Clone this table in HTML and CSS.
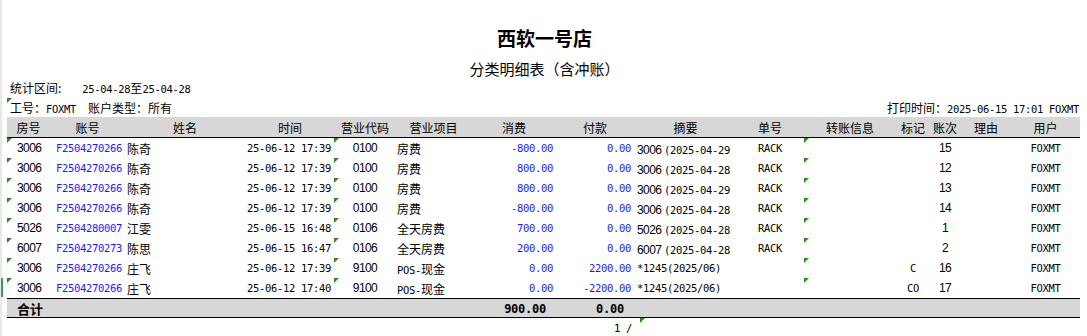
FILE: index.html
```html
<!DOCTYPE html>
<html lang="zh-CN">
<head>
<meta charset="utf-8">
<title>分类明细表（含冲账）</title>
<link rel="stylesheet" href="styles.css">
</head>
<body>
<div class="edge"><span class="edge-mark"></span></div>
<div class="page">
  <div class="title">西软一号店</div>
  <div class="subtitle">分类明细表（含冲账）</div>
  <div class="range">统计区间:<span class="m range-val">25-04-28</span>至<span class="m">25-04-28</span></div>
  <div class="info">
    <span class="mark info-mark"></span>
    <div class="info-left">工号：<span class="m">FOXMT</span><span class="sp"></span>账户类型：所有</div>
    <div class="info-right">打印时间：<span class="m">2025-06-15 17:01 FOXMT</span></div>
  </div>

  <div class="grid head">
    <div>房号</div><div>账号</div><div>姓名</div><div>时间</div><div>营业代码</div><div>营业项目</div><div>消费</div><div>付款</div><div>摘要</div><div>单号</div><div>转账信息</div><div>标记</div><div>账次</div><div>理由</div><div>用户</div>
  </div>

  <div class="grid row">
    <div class="c1"><span class="mark"></span><span class="n">3006</span></div><div class="c2 m blue">F2504270266</div><div class="c3">陈奇</div><div class="c4 m">25-06-12 17:39</div><div class="c5"><span class="mark m5"></span><span class="n">0100</span></div><div class="c6">房费</div><div class="c7 m blue">-800.00</div><div class="c8 m blue">0.00</div><div class="c9"><span><span class="n">3006</span> <span class="m">(2025-04-29</span></span></div><div class="c10 m">RACK</div><div class="c11"><span class="mark m11"></span></div><div class="c12 m"></div><div class="c13 n">15</div><div class="c14"></div><div class="c15 m">FOXMT</div>
  </div>
  <div class="grid row">
    <div class="c1"><span class="mark"></span><span class="n">3006</span></div><div class="c2 m blue">F2504270266</div><div class="c3">陈奇</div><div class="c4 m">25-06-12 17:39</div><div class="c5"><span class="mark m5"></span><span class="n">0100</span></div><div class="c6">房费</div><div class="c7 m blue">800.00</div><div class="c8 m blue">0.00</div><div class="c9"><span><span class="n">3006</span> <span class="m">(2025-04-28</span></span></div><div class="c10 m">RACK</div><div class="c11"><span class="mark m11"></span></div><div class="c12 m"></div><div class="c13 n">12</div><div class="c14"></div><div class="c15 m">FOXMT</div>
  </div>
  <div class="grid row">
    <div class="c1"><span class="mark"></span><span class="n">3006</span></div><div class="c2 m blue">F2504270266</div><div class="c3">陈奇</div><div class="c4 m">25-06-12 17:39</div><div class="c5"><span class="mark m5"></span><span class="n">0100</span></div><div class="c6">房费</div><div class="c7 m blue">800.00</div><div class="c8 m blue">0.00</div><div class="c9"><span><span class="n">3006</span> <span class="m">(2025-04-29</span></span></div><div class="c10 m">RACK</div><div class="c11"><span class="mark m11"></span></div><div class="c12 m"></div><div class="c13 n">13</div><div class="c14"></div><div class="c15 m">FOXMT</div>
  </div>
  <div class="grid row">
    <div class="c1"><span class="mark"></span><span class="n">3006</span></div><div class="c2 m blue">F2504270266</div><div class="c3">陈奇</div><div class="c4 m">25-06-12 17:39</div><div class="c5"><span class="mark m5"></span><span class="n">0100</span></div><div class="c6">房费</div><div class="c7 m blue">-800.00</div><div class="c8 m blue">0.00</div><div class="c9"><span><span class="n">3006</span> <span class="m">(2025-04-28</span></span></div><div class="c10 m">RACK</div><div class="c11"><span class="mark m11"></span></div><div class="c12 m"></div><div class="c13 n">14</div><div class="c14"></div><div class="c15 m">FOXMT</div>
  </div>
  <div class="grid row">
    <div class="c1"><span class="mark"></span><span class="n">5026</span></div><div class="c2 m blue">F2504280007</div><div class="c3">江雯</div><div class="c4 m">25-06-15 16:48</div><div class="c5"><span class="mark m5"></span><span class="n">0106</span></div><div class="c6">全天房费</div><div class="c7 m blue">700.00</div><div class="c8 m blue">0.00</div><div class="c9"><span><span class="n">5026</span> <span class="m">(2025-04-28</span></span></div><div class="c10 m">RACK</div><div class="c11"><span class="mark m11"></span></div><div class="c12 m"></div><div class="c13 n">1</div><div class="c14"></div><div class="c15 m">FOXMT</div>
  </div>
  <div class="grid row">
    <div class="c1"><span class="mark"></span><span class="n">6007</span></div><div class="c2 m blue">F2504270273</div><div class="c3">陈思</div><div class="c4 m">25-06-15 16:47</div><div class="c5"><span class="mark m5"></span><span class="n">0106</span></div><div class="c6">全天房费</div><div class="c7 m blue">200.00</div><div class="c8 m blue">0.00</div><div class="c9"><span><span class="n">6007</span> <span class="m">(2025-04-28</span></span></div><div class="c10 m">RACK</div><div class="c11"><span class="mark m11"></span></div><div class="c12 m"></div><div class="c13 n">2</div><div class="c14"></div><div class="c15 m">FOXMT</div>
  </div>
  <div class="grid row">
    <div class="c1"><span class="mark"></span><span class="n">3006</span></div><div class="c2 m blue">F2504270266</div><div class="c3">庄飞</div><div class="c4 m">25-06-12 17:39</div><div class="c5"><span class="mark m5"></span><span class="n">9100</span></div><div class="c6"><span><span class="m">POS-</span>现金</span></div><div class="c7 m blue">0.00</div><div class="c8 m blue">2200.00</div><div class="c9 m">*1245(2025/06)</div><div class="c10 m"></div><div class="c11"><span class="mark m11"></span></div><div class="c12 m">C</div><div class="c13 n">16</div><div class="c14"></div><div class="c15 m">FOXMT</div>
  </div>
  <div class="grid row">
    <div class="c1"><span class="mark"></span><span class="n">3006</span></div><div class="c2 m blue">F2504270266</div><div class="c3">庄飞</div><div class="c4 m">25-06-12 17:40</div><div class="c5"><span class="mark m5"></span><span class="n">9100</span></div><div class="c6"><span><span class="m">POS-</span>现金</span></div><div class="c7 m blue">0.00</div><div class="c8 m blue">-2200.00</div><div class="c9 m">*1245(2025/06)</div><div class="c10 m"></div><div class="c11"><span class="mark m11"></span></div><div class="c12 m">CO</div><div class="c13 n">17</div><div class="c14"></div><div class="c15 m">FOXMT</div>
  </div>

  <div class="grid total">
    <div class="c1 tlabel">合计</div><div></div><div></div><div></div><div></div><div></div><div class="t7 mb">900.00</div><div class="t8 mb">0.00</div><div></div><div></div><div></div><div></div><div></div><div></div><div></div>
  </div>

  <div class="pager"><span class="m">1 /</span><span class="mark pager-mark"></span></div>
</div>
</body>
</html>
```
FILE: styles.css
```css
* { box-sizing: border-box; }

html, body {
  margin: 0;
  padding: 0;
  background: #ffffff;
}

body {
  width: 1087px;
  height: 336px;
  overflow: hidden;
  position: relative;
  font-family: "Noto Sans CJK SC", "Liberation Sans", sans-serif;
  font-size: 12px;
  color: #000000;
}

.edge {
  position: absolute;
  left: 0;
  top: 0;
  width: 2px;
  height: 336px;
  background: #e8e8e8;
}

.edge-mark {
  position: absolute;
  left: 1px;
  top: 278px;
  width: 2px;
  height: 19px;
  background: #3c9a5f;
}

.page {
  padding-left: 7px;
  width: 1080px;
}

.m {
  font-family: "DejaVu Sans Mono", "Noto Sans CJK SC", monospace;
  font-size: 10.5px;
  letter-spacing: -0.32px;
}

.n {
  font-family: "Liberation Sans", sans-serif;
  font-size: 12px;
  letter-spacing: -0.6px;
}

.mb {
  font-family: "DejaVu Sans Mono", monospace;
  font-size: 12px;
  font-weight: bold;
  letter-spacing: -0.25px;
}

.blue { color: #1a1aff; }

.title {
  margin-top: 28px;
  height: 20px;
  line-height: 20px;
  text-align: center;
  font-size: 19px;
  font-weight: bold;
  padding-left: 2px;
}

.subtitle {
  margin-top: 12px;
  height: 18px;
  line-height: 18px;
  text-align: center;
  font-size: 15px;
  padding-left: 2px;
}

.range {
  margin-top: 2px;
  height: 16px;
  line-height: 16px;
  padding-left: 3px;
}

.range-val { margin-left: 21px; }

.info {
  position: relative;
  margin-top: 1px;
  height: 20px;
  display: flex;
  justify-content: space-between;
  align-items: center;
  padding-left: 3px;
  padding-right: 1px;
}

.sp { display: inline-block; width: 12px; }

.mark {
  position: absolute;
  left: 0;
  top: 0;
  width: 0;
  height: 0;
  border-top: 5px solid #2f8a22;
  border-right: 5px solid transparent;
}

.info-mark { top: 1px; }

.grid {
  display: grid;
  grid-template-columns: 43px 75px 120px 90px 60px 77px 84px 78px 103px 66px 94px 32px 32px 50px 69px;
  width: 1073px;
}

.grid > div {
  position: relative;
  white-space: pre;
  display: flex;
  align-items: center;
}

.head {
  height: 21px;
  background: #d6d7d6;
  border-bottom: 1px solid #000000;
}

.head > div { justify-content: center; }

.row { height: 20px; }

.c1 { padding-left: 10px; }
.c2 { padding-left: 6px; }
.c3 { padding-left: 2px; }
.c4 { justify-content: flex-end; padding-right: 4px; }
.c5 { justify-content: center; }
.c6 { padding-left: 2px; }
.c7 { justify-content: flex-end; padding-right: 3px; }
.c8 { justify-content: flex-end; padding-right: 3px; }
.c9 { padding-left: 3px; }
.c10 { padding-left: 21px; }
.c12 { justify-content: center; }
.c13 { justify-content: center; }
.c15 { justify-content: center; }

.m5 { left: -1px; }
.m11 { left: 1px; }

.total {
  height: 20px;
  background: #d6d7d6;
  border-top: 1px solid #000000;
  border-bottom: 1px solid #000000;
}

.tlabel {
  font-weight: bold;
  font-size: 13px;
}

.t7 { justify-content: flex-end; padding-right: 10px; }
.t8 { justify-content: flex-end; padding-right: 10px; }

.pager {
  position: relative;
  height: 18px;
  line-height: 18px;
  margin-left: 607px;
  width: 40px;
}

.pager-mark { left: 26px; top: 0; }
```
